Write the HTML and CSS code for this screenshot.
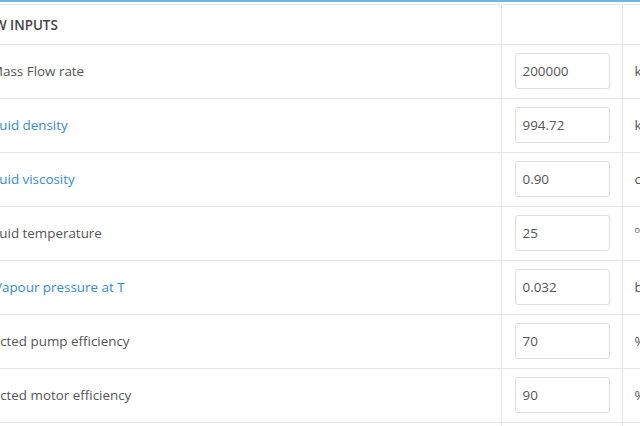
FILE: index.html
```html
<!DOCTYPE html>
<html lang="en">
<head>
    <meta charset="UTF-8">
    <meta name="viewport" content="width=device-width, initial-scale=1.0">
    <title>Pump Sizing - Flow Inputs</title>
    <link rel="stylesheet" href="styles.css">
</head>
<body>
    <div class="box">
        <table class="inputs">
            <colgroup>
                <col class="col-label">
                <col class="col-value">
                <col class="col-unit">
            </colgroup>
            <thead>
                <tr>
                    <th class="label">Flow Inputs</th>
                    <th></th>
                    <th></th>
                </tr>
            </thead>
            <tbody>
                <tr>
                    <td class="label indent-m">Mass Flow rate</td>
                    <td class="value"><input type="text" value="200000"></td>
                    <td class="unit">kg/h</td>
                </tr>
                <tr>
                    <td class="label indent"><a href="#">Fluid density</a></td>
                    <td class="value"><input type="text" value="994.72"></td>
                    <td class="unit">kg/m&sup3;</td>
                </tr>
                <tr>
                    <td class="label indent"><a href="#">Fluid viscosity</a></td>
                    <td class="value"><input type="text" value="0.90"></td>
                    <td class="unit">cP</td>
                </tr>
                <tr>
                    <td class="label indent">Fluid temperature</td>
                    <td class="value"><input type="text" value="25"></td>
                    <td class="unit"><sup>o</sup>C</td>
                </tr>
                <tr>
                    <td class="label indent-v"><a href="#">Vapour pressure at T</a></td>
                    <td class="value"><input type="text" value="0.032"></td>
                    <td class="unit">bar</td>
                </tr>
                <tr>
                    <td class="label">Expected pump efficiency</td>
                    <td class="value"><input type="text" value="70"></td>
                    <td class="unit">%</td>
                </tr>
                <tr>
                    <td class="label">Expected motor efficiency</td>
                    <td class="value"><input type="text" value="90"></td>
                    <td class="unit">%</td>
                </tr>
                <tr>
                    <td class="label">Pipe roughness</td>
                    <td class="value"><input type="text" value="0.045"></td>
                    <td class="unit">mm</td>
                </tr>
            </tbody>
        </table>
    </div>
</body>
</html>
```

FILE: styles.css
```css
html, body {
    margin: 0;
    padding: 0;
    overflow: hidden;
}

body {
    font-family: 'Open Sans', 'Liberation Sans', sans-serif;
    font-size: 13.4px;
    color: #555;
    background: #fff;
}

.box {
    margin-left: -40px;
    width: 800px;
    border-top: 2px solid #6cb8e6;
    padding-top: 2px;
}

.inputs {
    width: 100%;
    border-collapse: collapse;
    table-layout: fixed;
}

.col-label {
    width: 541px;
}

.col-value {
    width: 121px;
}

.inputs th,
.inputs td {
    border: 1px solid #e7e7e7;
    vertical-align: middle;
    text-align: left;
}

.inputs tr > :first-child {
    border-left: none;
}

.inputs th {
    height: 39px;
    padding: 0 9px;
    font-weight: 600;
    text-transform: uppercase;
    color: #444;
}

.inputs td {
    height: 36px;
    padding: 8px 12px 9px 13px;
}

.inputs td.label {
    padding-left: 10px;
    white-space: nowrap;
}

.inputs td.indent {
    padding-left: 29px;
}

.inputs td.indent-m {
    padding-left: 31px;
}

.inputs td.indent-v {
    padding-left: 34px;
}

.label a {
    color: #348cd2;
    text-decoration: none;
}

.value input {
    display: block;
    width: 100%;
    height: 36px;
    box-sizing: border-box;
    padding: 0 7px;
    border: 1px solid #dedede;
    border-radius: 3px;
    font-family: inherit;
    font-size: 13.4px;
    color: #555;
}

.inputs td.unit {
    padding-left: 12px;
    white-space: nowrap;
}

.unit sup {
    font-size: 9px;
}
```
